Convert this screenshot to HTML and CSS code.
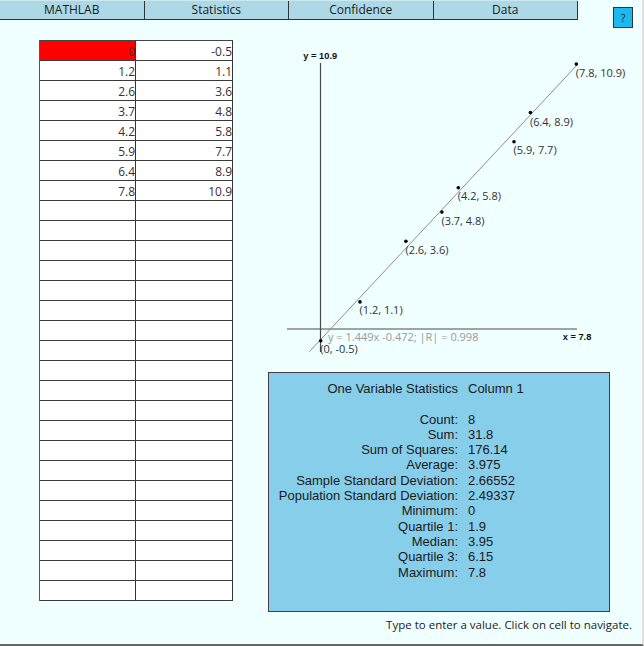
FILE: index.html
```html
<!DOCTYPE html>
<html>
<head>
<meta charset="utf-8">
<link rel="stylesheet" href="styles.css">
</head>
<body>
<div class="app">
  <div class="header">
    <nav class="tabs">
      <div class="tab">MATHLAB</div>
      <div class="tab">Statistics</div>
      <div class="tab">Confidence</div>
      <div class="tab">Data</div>
    </nav>
    <button class="help">?</button>
  </div>
  <div class="main">
    <div class="sheet">
      <div class="cell active">0</div><div class="cell">-0.5</div>
      <div class="cell">1.2</div><div class="cell">1.1</div>
      <div class="cell">2.6</div><div class="cell">3.6</div>
      <div class="cell">3.7</div><div class="cell">4.8</div>
      <div class="cell">4.2</div><div class="cell">5.8</div>
      <div class="cell">5.9</div><div class="cell">7.7</div>
      <div class="cell">6.4</div><div class="cell">8.9</div>
      <div class="cell">7.8</div><div class="cell">10.9</div>
      <div class="cell"></div><div class="cell"></div>
      <div class="cell"></div><div class="cell"></div>
      <div class="cell"></div><div class="cell"></div>
      <div class="cell"></div><div class="cell"></div>
      <div class="cell"></div><div class="cell"></div>
      <div class="cell"></div><div class="cell"></div>
      <div class="cell"></div><div class="cell"></div>
      <div class="cell"></div><div class="cell"></div>
      <div class="cell"></div><div class="cell"></div>
      <div class="cell"></div><div class="cell"></div>
      <div class="cell"></div><div class="cell"></div>
      <div class="cell"></div><div class="cell"></div>
      <div class="cell"></div><div class="cell"></div>
      <div class="cell"></div><div class="cell"></div>
      <div class="cell"></div><div class="cell"></div>
      <div class="cell"></div><div class="cell"></div>
      <div class="cell"></div><div class="cell"></div>
      <div class="cell"></div><div class="cell"></div>
      <div class="cell"></div><div class="cell"></div>
      <div class="cell"></div><div class="cell"></div>
    </div>
    <div class="side">
      <svg class="chart" width="374" height="332" viewBox="0 0 374 332">
        <line class="axis" x1="52.5" y1="23" x2="52.5" y2="312"/>
        <line class="axis" x1="19" y1="289" x2="309" y2="289"/>
        <text class="axis-label" x="35.3" y="19.3">y = 10.9</text>
        <text class="axis-label" x="294.7" y="300">x = 7.8</text>
        <line class="fit" x1="41.3" y1="311.7" x2="308.3" y2="25.8"/>
        <text class="fit-label" x="60" y="300.7">y = 1.449x -0.472; |R| = 0.998</text>
        <g class="pts">
          <circle cx="52.7" cy="300.7" r="1.8"/>
          <circle cx="92" cy="261.9" r="1.8"/>
          <circle cx="137.9" cy="201.2" r="1.8"/>
          <circle cx="173.9" cy="172.1" r="1.8"/>
          <circle cx="190.3" cy="147.8" r="1.8"/>
          <circle cx="246" cy="101.7" r="1.8"/>
          <circle cx="262.4" cy="72.6" r="1.8"/>
          <circle cx="308.3" cy="24.1" r="1.8"/>
        </g>
        <g class="pt-labels">
          <text x="52.2" y="312.7">(0, -0.5)</text>
          <text x="91.5" y="274.4">(1.2, 1.1)</text>
          <text x="137.4" y="213.7">(2.6, 3.6)</text>
          <text x="173.4" y="184.6">(3.7, 4.8)</text>
          <text x="189.8" y="160.3">(4.2, 5.8)</text>
          <text x="245.5" y="114.2">(5.9, 7.7)</text>
          <text x="261.9" y="85.6">(6.4, 8.9)</text>
          <text x="307.8" y="37.1">(7.8, 10.9)</text>
        </g>
      </svg>
      <div class="stats">
        <div class="k">One Variable Statistics</div><div class="v">Column 1</div>
        <div class="k spacer"></div><div class="v spacer"></div>
        <div class="k">Count:</div><div class="v">8</div>
        <div class="k">Sum:</div><div class="v">31.8</div>
        <div class="k">Sum of Squares:</div><div class="v">176.14</div>
        <div class="k">Average:</div><div class="v">3.975</div>
        <div class="k">Sample Standard Deviation:</div><div class="v">2.66552</div>
        <div class="k">Population Standard Deviation:</div><div class="v">2.49337</div>
        <div class="k">Minimum:</div><div class="v">0</div>
        <div class="k">Quartile 1:</div><div class="v">1.9</div>
        <div class="k">Median:</div><div class="v">3.95</div>
        <div class="k">Quartile 3:</div><div class="v">6.15</div>
        <div class="k">Maximum:</div><div class="v">7.8</div>
      </div>
    </div>
  </div>
  <div class="status">Type to enter a value. Click on cell to navigate.</div>
</div>
</body>
</html>
```
FILE: styles.css
```css
* { box-sizing: border-box; }
html, body { margin: 0; padding: 0; background: #ffffff; }
.app {
  width: 644px;
  height: 646px;
  background: #f0ffff;
  border-right: 2px solid #e0e0e0;
  border-bottom: 2px solid #666666;
  font-family: "Open Sans", sans-serif;
  color: #222222;
  overflow: hidden;
}
.header {
  display: flex;
  align-items: flex-start;
  height: 28px;
}
.tabs {
  display: flex;
  width: 578px;
  height: 20px;
  background: #add8e6;
  border-top: 1px solid #cde8f0;
  border-bottom: 1px solid #333333;
}
.tab {
  flex: 1;
  border-right: 1px solid #333333;
  text-align: center;
  font-size: 12px;
  line-height: 17px;
  color: #1a1a1a;
}
.help {
  margin: 7px 0 0 35px;
  width: 20px;
  height: 21px;
  padding: 0;
  background: #1bb9ef;
  border: 1px solid #333333;
  font-family: "Open Sans", sans-serif;
  font-size: 11px;
  color: #1a2a3a;
  line-height: 18px;
}
.main {
  display: flex;
  align-items: flex-start;
  margin-top: 12px;
  padding-left: 39px;
}
.sheet {
  display: grid;
  grid-template-columns: 96px 97px;
  border-left: 1px solid #555555;
  border-top: 1px solid #444444;
}
.cell {
  height: 20px;
  background: #ffffff;
  border-right: 1px solid #333333;
  border-bottom: 1px solid #3a3a3a;
  text-align: right;
  font-size: 12px;
  line-height: 16px;
  padding-top: 3px;
  color: #333333;
}
.cell.active { background: #ff0000; }
.side {
  margin-left: 35px;
  display: flex;
  flex-direction: column;
}
.chart { display: block; }
.axis { stroke: #4a4a4a; stroke-width: 1.2; }
.axis-label {
  font-family: "Liberation Sans", sans-serif;
  font-weight: bold;
  font-size: 9.3px;
  fill: #111111;
}
.fit { stroke: #8c8c8c; stroke-width: 1; }
.fit-label {
  font-family: "Open Sans", sans-serif;
  font-size: 11px;
  fill: #9a9a9a;
}
.pts circle { fill: #000000; }
.pt-labels text {
  font-family: "Open Sans", sans-serif;
  font-size: 11px;
  fill: #333333;
}
.stats {
  width: 342px;
  height: 240px;
  background: #87ceeb;
  border: 1px solid #404040;
  padding-top: 8px;
  display: grid;
  grid-template-columns: 189px auto;
  grid-auto-rows: 15.3px;
  column-gap: 10px;
  align-content: start;
  font-family: "Liberation Sans", sans-serif;
  font-size: 13px;
  line-height: 15.3px;
  color: #1a1a1a;
}
.stats .k { text-align: right; white-space: nowrap; }
.stats .v { white-space: nowrap; }
.status {
  margin-top: 5px;
  padding-right: 10px;
  text-align: right;
  font-size: 11.5px;
  line-height: 16px;
  color: #222222;
}
```
